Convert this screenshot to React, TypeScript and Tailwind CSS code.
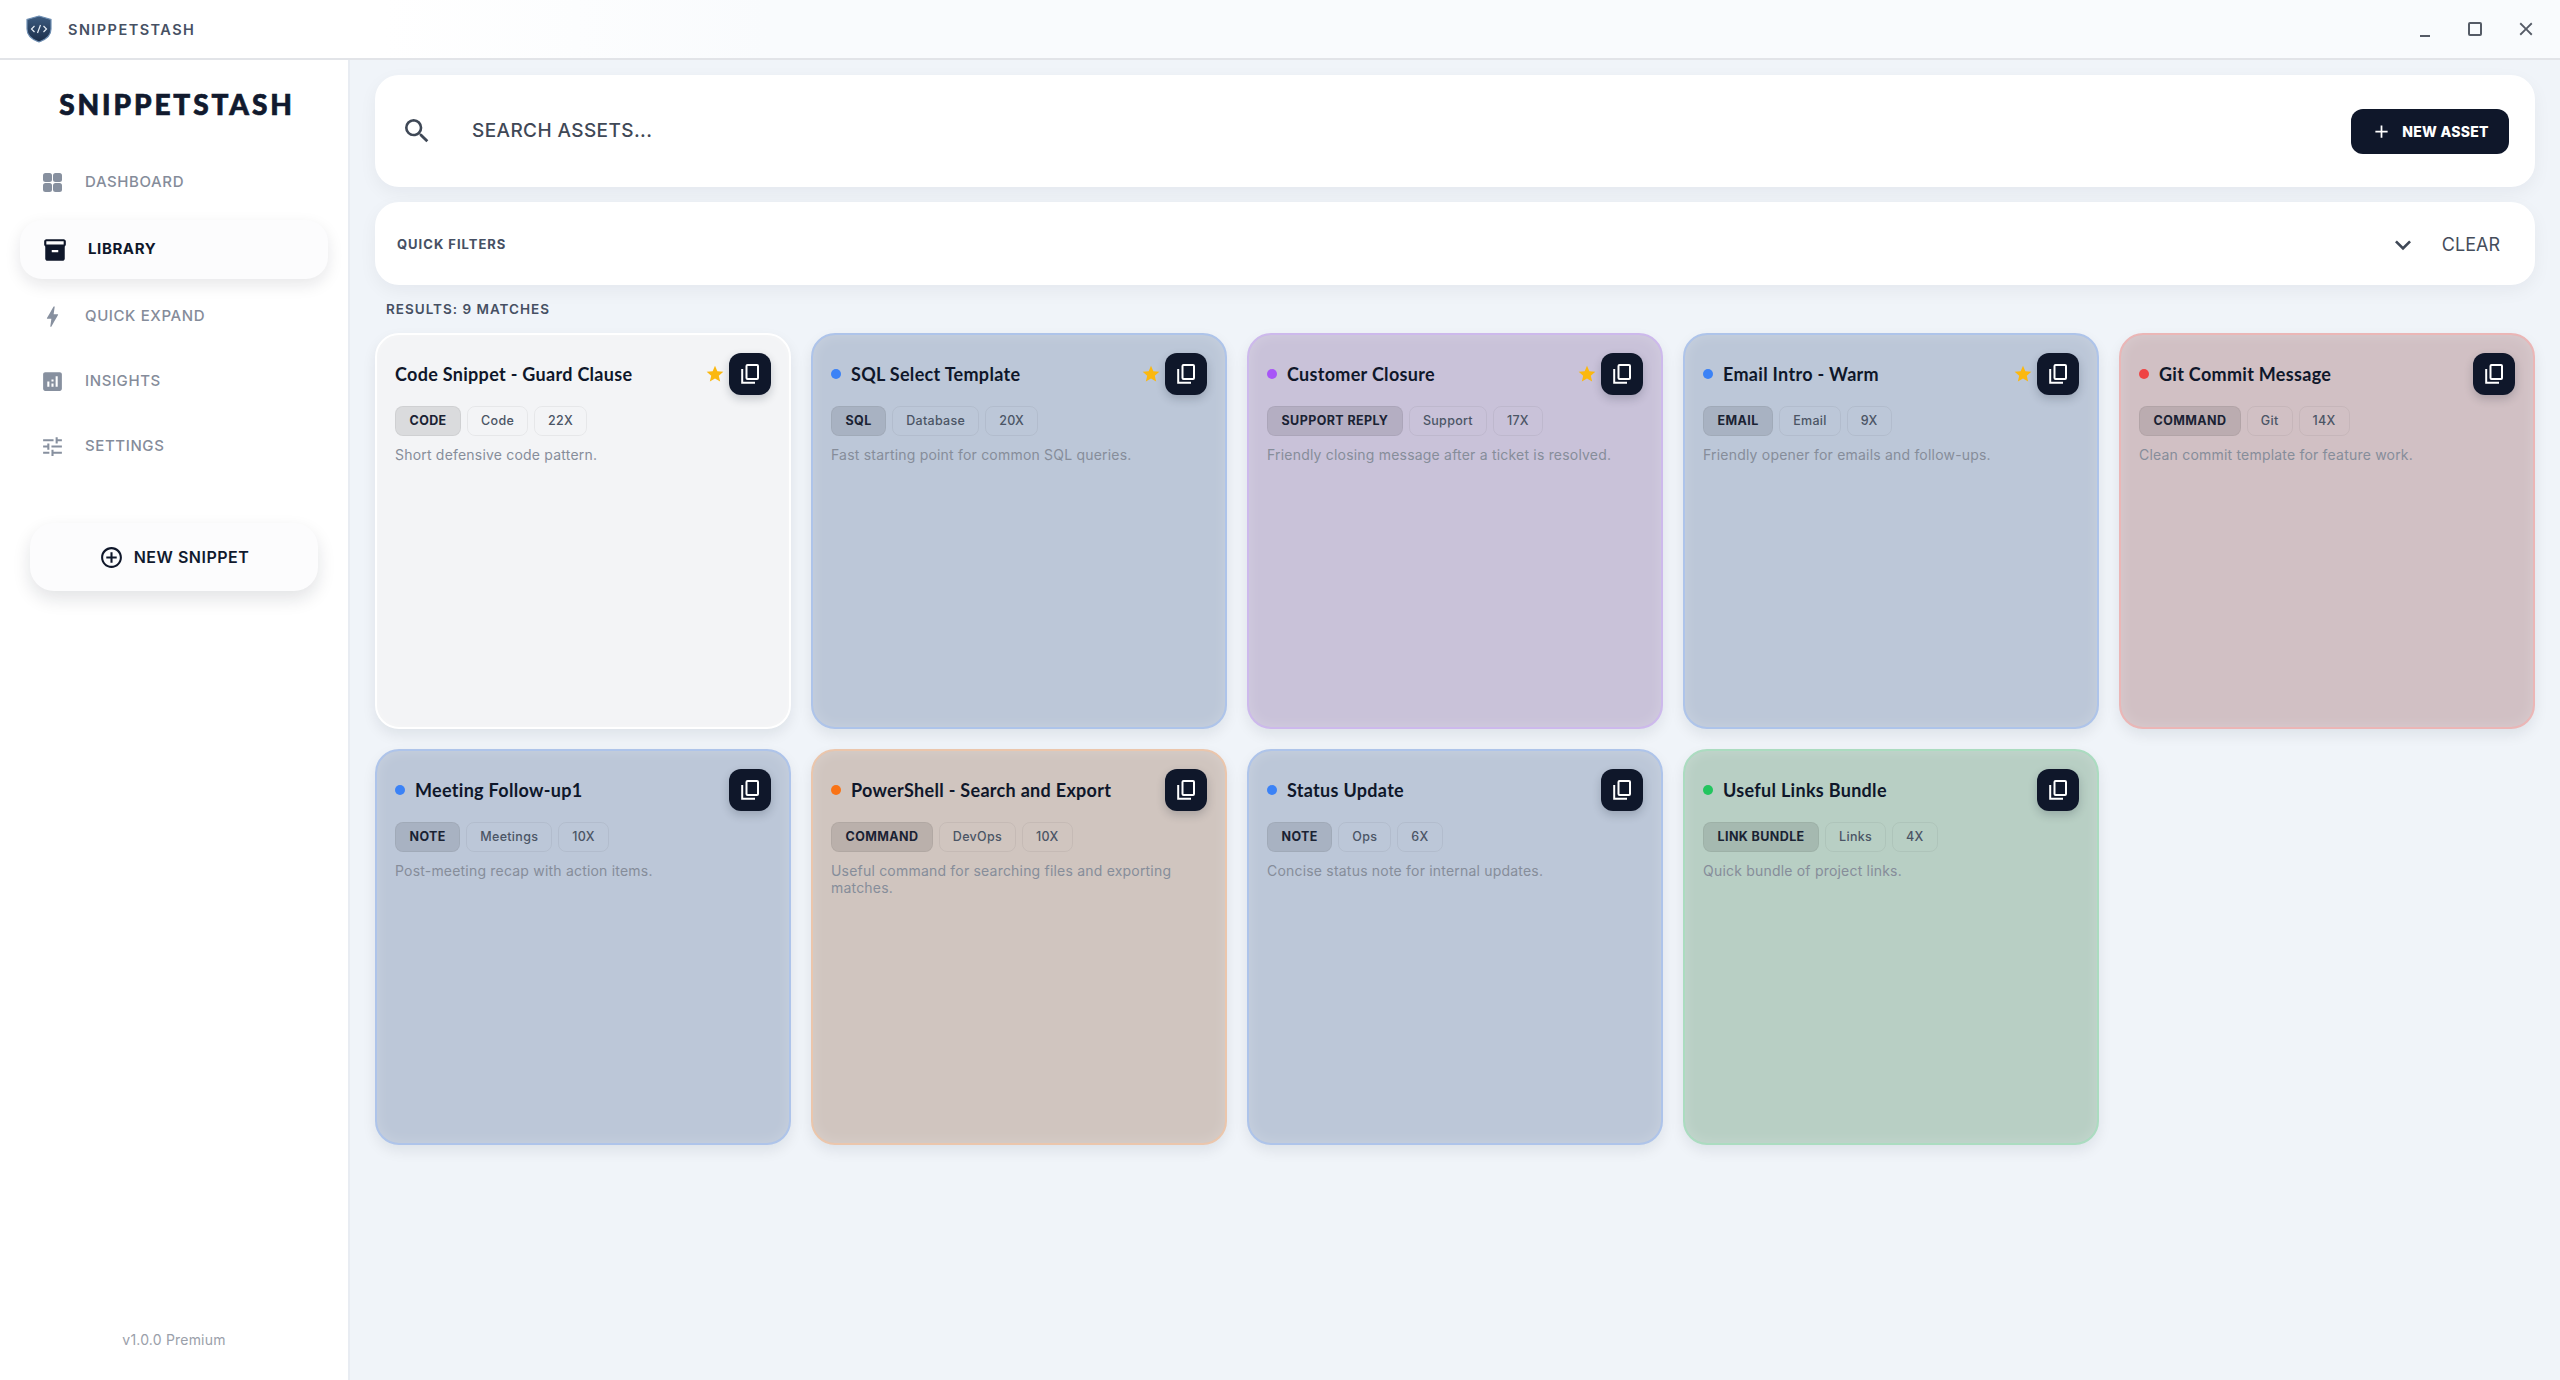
import { MdAdd, MdAddCircleOutline, MdAnalytics, MdBolt, MdClose, MdExpandMore, MdInventory2, MdSearch, MdStar, MdTune } from 'react-icons/md';

const sans = 'font-["Inter","Liberation_Sans",sans-serif]';
const heading = 'font-["Lato","Inter",sans-serif]';

type Asset = {
    title: string;
    kind: string;
    category: string;
    uses: string;
    description: string;
    dot?: string;
    starred?: boolean;
    card: string;
};

const assets: Asset[] = [
    { title: 'Code Snippet - Guard Clause', kind: 'CODE', category: 'Code', uses: '22X', description: 'Short defensive code pattern.', starred: true, card: 'bg-[#f3f4f6] border-[#ffffff]' },
    { title: 'SQL Select Template', kind: 'SQL', category: 'Database', uses: '20X', description: 'Fast starting point for common SQL queries.', dot: 'bg-[#3b82f6]', starred: true, card: 'bg-[#bcc7d8] border-[#aec4ea]' },
    { title: 'Customer Closure', kind: 'SUPPORT REPLY', category: 'Support', uses: '17X', description: 'Friendly closing message after a ticket is resolved.', dot: 'bg-[#a855f7]', starred: true, card: 'bg-[#c9c2d9] border-[#cdb9ec]' },
    { title: 'Email Intro - Warm', kind: 'EMAIL', category: 'Email', uses: '9X', description: 'Friendly opener for emails and follow-ups.', dot: 'bg-[#3b82f6]', starred: true, card: 'bg-[#bcc7d8] border-[#aec4ea]' },
    { title: 'Git Commit Message', kind: 'COMMAND', category: 'Git', uses: '14X', description: 'Clean commit template for feature work.', dot: 'bg-[#ef4444]', card: 'bg-[#d1c0c4] border-[#ebb6b6]' },
    { title: 'Meeting Follow-up1', kind: 'NOTE', category: 'Meetings', uses: '10X', description: 'Post-meeting recap with action items.', dot: 'bg-[#3b82f6]', card: 'bg-[#bcc7d8] border-[#aec4ea]' },
    { title: 'PowerShell - Search and Export', kind: 'COMMAND', category: 'DevOps', uses: '10X', description: 'Useful command for searching files and exporting matches.', dot: 'bg-[#f97316]', card: 'bg-[#d0c5bf] border-[#ebc6ac]' },
    { title: 'Status Update', kind: 'NOTE', category: 'Ops', uses: '6X', description: 'Concise status note for internal updates.', dot: 'bg-[#3b82f6]', card: 'bg-[#bcc7d8] border-[#aec4ea]' },
    { title: 'Useful Links Bundle', kind: 'LINK BUNDLE', category: 'Links', uses: '4X', description: 'Quick bundle of project links.', dot: 'bg-[#22c55e]', card: 'bg-[#b8cfc4] border-[#abdcc0]' },
];

function ShieldLogo() {
    return (
        <svg viewBox="0 0 26 28" className="h-[28px] w-[26px]">
            <defs>
                <linearGradient id="shield" x1="0" y1="0" x2="0" y2="1">
                    <stop offset="0" stopColor="#3d5c80" />
                    <stop offset="1" stopColor="#1b2d49" />
                </linearGradient>
            </defs>
            <path d="M13 1 L25 4.5 V14 C25 21 19 25 13 27 C7 25 1 21 1 14 V4.5 Z" fill="url(#shield)" stroke="#6f8fb3" strokeWidth="1.2" />
            <path d="M8.5 11 L5.5 14 L8.5 17 M17.5 11 L20.5 14 L17.5 17 M14.5 10 L11.5 18" fill="none" stroke="#e6edf5" strokeWidth="1.2" />
        </svg>
    );
}

function DashboardIcon() {
    return (
        <svg viewBox="0 0 19 19" className="h-[19px] w-[19px] shrink-0" fill="#87909f">
            <rect x="0" y="0" width="9" height="9" rx="2.5" />
            <rect x="10" y="0" width="9" height="9" rx="2.5" />
            <rect x="0" y="10" width="9" height="9" rx="2.5" />
            <rect x="10" y="10" width="9" height="9" rx="2.5" />
        </svg>
    );
}

function CopyIcon() {
    return (
        <svg viewBox="0 0 18 20" className="h-[20px] w-[18px]" fill="none" stroke="#ffffff" strokeWidth="2">
            <rect x="5.5" y="1" width="11.5" height="14" rx="1" />
            <path d="M1.2 5 V18.8 H14" />
        </svg>
    );
}

function NavItem({ label, icon }: { label: string; icon: React.ReactNode }) {
    return (
        <div className="flex h-[65px] items-center pl-[43px]">
            <span className="flex w-[19px] shrink-0 justify-center">{icon}</span>
            <span className="ml-[23px] text-[15px] font-medium tracking-[0.6px] text-[#858c9a]">{label}</span>
        </div>
    );
}

function Chip({ children, strong }: { children: string; strong?: boolean }) {
    return strong ? (
        <span className="flex h-[30px] items-center rounded-[8px] border border-black/5 bg-black/10 px-[13.5px] text-[12.5px] font-bold tracking-[0.4px] text-[#1a2233]">
            {children}
        </span>
    ) : (
        <span className="flex h-[30px] items-center rounded-[8px] border border-black/5 px-[13px] text-[12.5px] font-medium tracking-[0.3px] text-[#4b5565]">
            {children}
        </span>
    );
}

function AssetCard({ asset }: { asset: Asset }) {
    return (
        <div className={`h-[396px] rounded-[24px] border-2 px-[18px] pt-[17px] shadow-[0_6px_14px_rgba(15,23,42,0.08),inset_0_0_14px_rgba(255,255,255,0.2)] ${asset.card}`}>
            <div className="flex h-[43px] items-center">
                {asset.dot && <span className={`mr-[10px] h-[10px] w-[10px] rounded-full ${asset.dot}`} />}
                <span className={`${heading} flex-1 pt-px text-[18px] font-bold tracking-[0.3px] text-[#0f172a]`}>{asset.title}</span>
                {asset.starred && <MdStar className="mr-[4px] text-[20px] text-[#fbb80f]" />}
                <span className="flex h-[42px] w-[42px] items-center justify-center rounded-[12px] bg-[#0f172a] shadow-[0_4px_10px_rgba(15,23,42,0.2)]">
                    <CopyIcon />
                </span>
            </div>
            <div className="mt-[11px] flex gap-[6px]">
                <Chip strong>{asset.kind}</Chip>
                <Chip>{asset.category}</Chip>
                <Chip>{asset.uses}</Chip>
            </div>
            <p className="mt-[10px] text-[14px] leading-[17px] tracking-[0.2px] text-[#868d9a]">{asset.description}</p>
        </div>
    );
}

export default function App() {
    return (
        <div className={`${sans} flex h-[1380px] w-[2560px] flex-col overflow-hidden bg-[#f0f4f9]`}>
            <header className="flex h-[60px] shrink-0 items-center border-b-2 border-[#e2e4e8] bg-[linear-gradient(90deg,#ffffff_15%,#f9fbfd_30%)] pl-[26px] pr-[23px]">
                <ShieldLogo />
                <span className="ml-[16px] flex-1 pt-[2px] text-[14.5px] font-semibold tracking-[1.45px] text-[#465063]">SNIPPETSTASH</span>
                <span className="mr-[38px] mt-[14px] h-[2px] w-[10px] bg-[#555b66]" />
                <span className="mr-[33px] h-[14px] w-[14px] rounded-[2px] border-2 border-[#555b66]" />
                <MdClose className="text-[22px] text-[#555b66]" />
            </header>
            <div className="flex min-h-0 flex-1">
                <aside className="flex w-[350px] shrink-0 flex-col border-r-2 border-[#e8ecf2] bg-white">
                    <div className={`${heading} mt-[23px] pl-[6px] text-center text-[28px] font-black tracking-[2.9px] text-[#111a2e] [-webkit-text-stroke:0.7px_#111a2e]`}>SNIPPETSTASH</div>
                    <nav className="mt-[25px]">
                        <NavItem label="DASHBOARD" icon={<DashboardIcon />} />
                        <div className="mx-[20px] my-[5px] flex h-[59px] items-center rounded-[22px] bg-[#fcfcfd] pl-[22px] shadow-[0_6px_16px_rgba(15,23,42,0.1)]">
                            <MdInventory2 className="text-[26px] text-[#0f172a]" />
                            <span className="ml-[20px] text-[15px] font-bold tracking-[0.6px] text-[#0f172a]">LIBRARY</span>
                        </div>
                        <NavItem label="QUICK EXPAND" icon={<MdBolt className="shrink-0 text-[27px] text-[#87909f]" />} />
                        <NavItem label="INSIGHTS" icon={<MdAnalytics className="shrink-0 text-[25px] text-[#87909f]" />} />
                        <NavItem label="SETTINGS" icon={<MdTune className="shrink-0 text-[25px] text-[#87909f]" />} />
                    </nav>
                    <div className="mx-[30px] mt-[44px] flex h-[68px] items-center justify-center gap-[10px] rounded-[24px] bg-[#fcfcfd] shadow-[0_8px_18px_rgba(15,23,42,0.12)]">
                        <MdAddCircleOutline className="text-[25px] text-[#0f172a]" />
                        <span className="text-[16px] font-semibold tracking-[0.5px] text-[#111a2e]">NEW SNIPPET</span>
                    </div>
                    <div className="mt-auto pb-[30px] text-center text-[14px] tracking-[0.2px] text-[#9aa0aa]">v1.0.0 Premium</div>
                </aside>
                <main className="min-w-0 flex-1 px-[25px] pt-[15px]">
                    <div className="flex h-[112px] items-center rounded-[24px] bg-white pl-[26px] pr-[26px] shadow-[0_6px_18px_rgba(15,23,42,0.05)]">
                        <MdSearch className="text-[32px] text-[#3f4856]" />
                        <span className="ml-[39px] flex-1 text-[19px] font-medium tracking-[0.4px] text-[#3f4856]">SEARCH ASSETS...</span>
                        <span className="flex h-[45px] w-[158px] items-center justify-center gap-[10px] rounded-[12px] bg-[#0f172a] text-white">
                            <MdAdd className="text-[21px]" />
                            <span className="text-[14px] font-extrabold tracking-[0.25px]">NEW ASSET</span>
                        </span>
                    </div>
                    <div className="mt-[15px] flex h-[83px] items-center rounded-[24px] bg-white pl-[22px] pr-[35px] pt-[2px] shadow-[0_6px_18px_rgba(15,23,42,0.05)]">
                        <span className="flex-1 text-[13px] font-bold tracking-[1px] text-[#465063]">QUICK FILTERS</span>
                        <MdExpandMore className="text-[32px] text-[#3f4856]" />
                        <span className="ml-[23px] text-[18px] text-[#454d5b]">CLEAR</span>
                    </div>
                    <div className="mb-[15px] ml-[11px] mt-[15px] text-[13.5px] font-semibold leading-[18px] tracking-[1px] text-[#465063]">RESULTS: 9 MATCHES</div>
                    <div className="grid grid-cols-5 gap-[20px]">
                        {assets.map((asset) => (
                            <AssetCard key={asset.title} asset={asset} />
                        ))}
                    </div>
                </main>
            </div>
        </div>
    );
}
